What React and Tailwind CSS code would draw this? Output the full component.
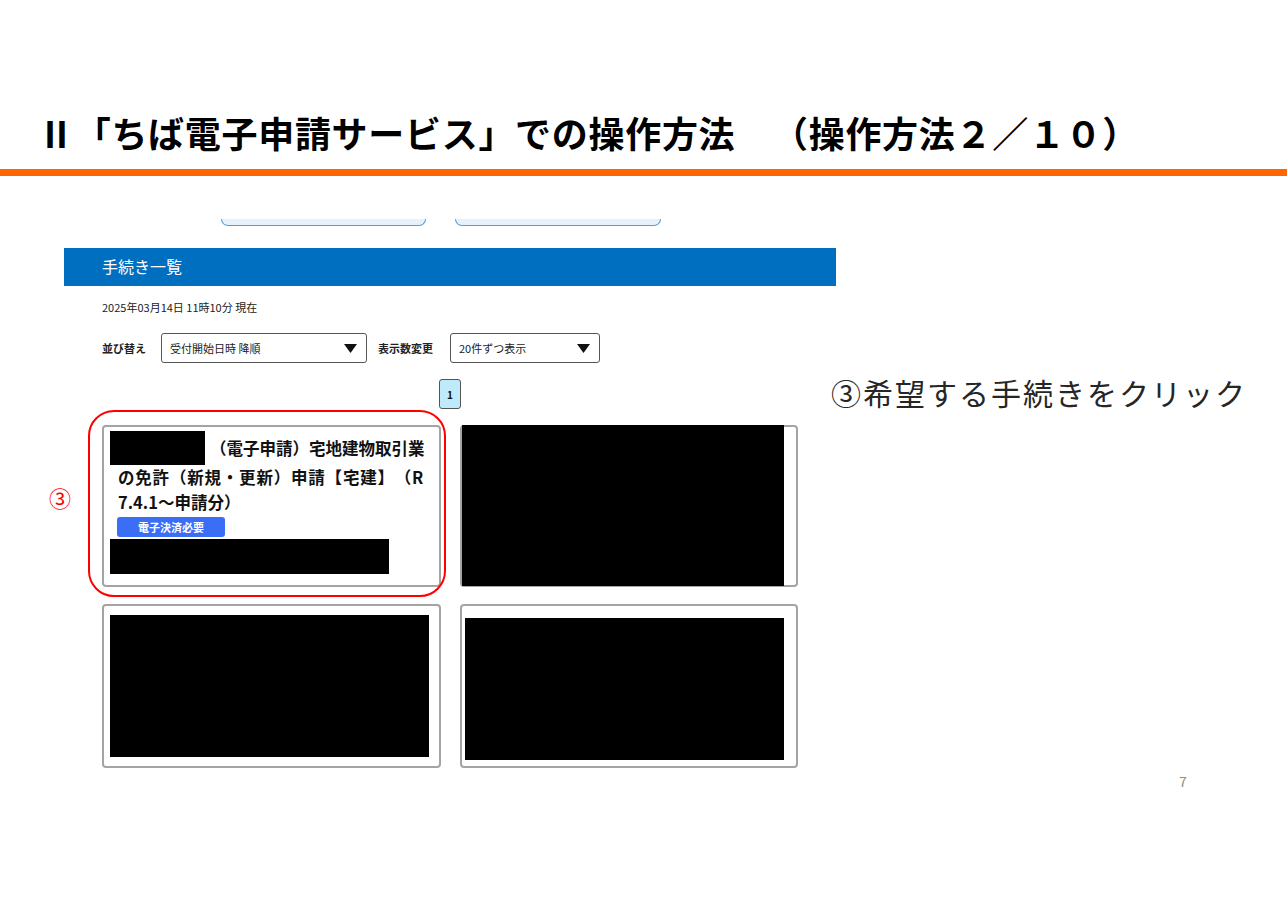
import React from 'react';

const jp = { fontFamily: '"Noto Sans CJK JP", "Noto Sans", sans-serif' };

function Triangle() {
  return (
    <svg width="13" height="9" viewBox="0 0 13 9" className="shrink-0">
      <path d="M0 0 H13 L6.5 9 Z" fill="#111" />
    </svg>
  );
}

function SelectBox({ label, width }) {
  return (
    <div className={`flex items-center justify-between h-[30px] border border-[#555] rounded-[3px] pl-[8px] pr-[9px] ${width}`}>
      <span className="text-[11px] text-[#222]">{label}</span>
      <Triangle />
    </div>
  );
}

function Card({ children, className = '' }) {
  return (
    <div className={`border-2 border-[#a4a4a4] rounded-[4px] bg-white ${className}`}>
      {children}
    </div>
  );
}

export default function App() {
  return (
    <div className="relative w-[1287px] h-[910px] bg-white overflow-hidden [text-spacing-trim:space-all]" style={jp}>
      {/* slide title */}
      <div className="pt-[110px] pl-[38px] h-[169px]">
        <h1 className="text-[36px] leading-[44px] tracking-[0.7px] font-bold text-black whitespace-nowrap">
          Ⅱ「ちば電子申請サービス」での操作方法　（操作方法２／１０）
        </h1>
      </div>
      <div className="h-[7px] bg-[#ff6600]" />

      {/* captured page */}
      <div className="ml-[64px] w-[772px]">
        <div className="flex mt-[43px] pl-[157px] gap-[29px]">
          <div className="w-[205px] h-[7px] bg-[#e6f1fa] border-x border-b border-[#5b9bd5] rounded-b-[9px]" />
          <div className="w-[206px] h-[7px] bg-[#e6f1fa] border-x border-b border-[#5b9bd5] rounded-b-[9px]" />
        </div>

        <div className="mt-[22px] h-[38px] bg-[#006fc0] flex items-center pl-[38px]">
          <span className="text-[16px] leading-[20px] -mt-[3px] text-white">手続き一覧</span>
        </div>

        <div className="mt-[14px] pl-[38px] text-[11px] leading-[14px] text-[#222]">
          2025年03月14日 11時10分 現在
        </div>

        <div className="mt-[19px] pl-[38px] flex items-center">
          <span className="text-[11px] font-bold text-[#222] w-[59px]">並び替え</span>
          <SelectBox label="受付開始日時 降順" width="w-[206px]" />
          <span className="text-[11px] font-bold text-[#222] ml-[11px] w-[72px]">表示数変更</span>
          <SelectBox label="20件ずつ表示" width="w-[150px]" />
        </div>

        <div className="mt-[16px] pl-[375px]">
          <div className="w-[22px] h-[30px] bg-[#bfeaf9] border border-[#555] rounded-[3px] flex items-center justify-center">
            <span className="text-[10px] font-bold text-[#111]">1</span>
          </div>
        </div>

        <div className="mt-[16px] ml-[38px] grid grid-cols-[339px_338px] grid-rows-[162px_164px] gap-x-[19px] gap-y-[17px]">
          <Card className="pl-[6px] pt-[4px]">
            <div className="flex items-center">
              <div className="w-[95px] h-[34px] bg-black" />
              <span className="ml-[5px] text-[16.5px] leading-[25px] font-bold text-[#111] whitespace-nowrap">
                （電子申請）宅地建物取引業
              </span>
            </div>
            <div className="pl-[8px] text-[16.5px] leading-[25px] font-bold text-[#111] whitespace-nowrap">
              <div className="tracking-[0.8px]">の免許（新規・更新）申請【宅建】（R</div>
              <div>7.4.1～申請分）</div>
            </div>
            <div className="ml-[7px] mt-[2px] w-[108px] h-[20px] bg-[#3a6ef5] rounded-[3px] flex items-center pl-[21px]">
              <span className="text-[11px] font-bold text-white leading-none">電子決済必要</span>
            </div>
            <div className="mt-[2px] w-[279px] h-[35px] bg-black" />
          </Card>

          <Card>
            <div className="-mt-[2px] w-[322px] h-[161px] bg-black" />
          </Card>

          <Card className="pl-[6px] pt-[9px]">
            <div className="w-[319px] h-[142px] bg-black" />
          </Card>

          <Card className="pl-[3px] pt-[12px]">
            <div className="w-[319px] h-[142px] bg-black" />
          </Card>
        </div>
      </div>

      {/* annotations */}
      <div className="absolute left-[88px] top-[410px] w-[358px] h-[187px] border-2 border-[#ff0000] rounded-[26px]" />
      <div className="absolute left-[49px] top-[482px] text-[22px] leading-[30px] text-[#ff0000]">③</div>
      <div className="absolute left-[831px] top-[373px] text-[30px] leading-[38px] tracking-[2px] text-[#262626] whitespace-nowrap">
        ③希望する手続きをクリック
      </div>
      <div className="absolute left-[1179px] top-[772px] text-[14px] leading-[18px] text-[#8c8c8c]">7</div>
    </div>
  );
}
